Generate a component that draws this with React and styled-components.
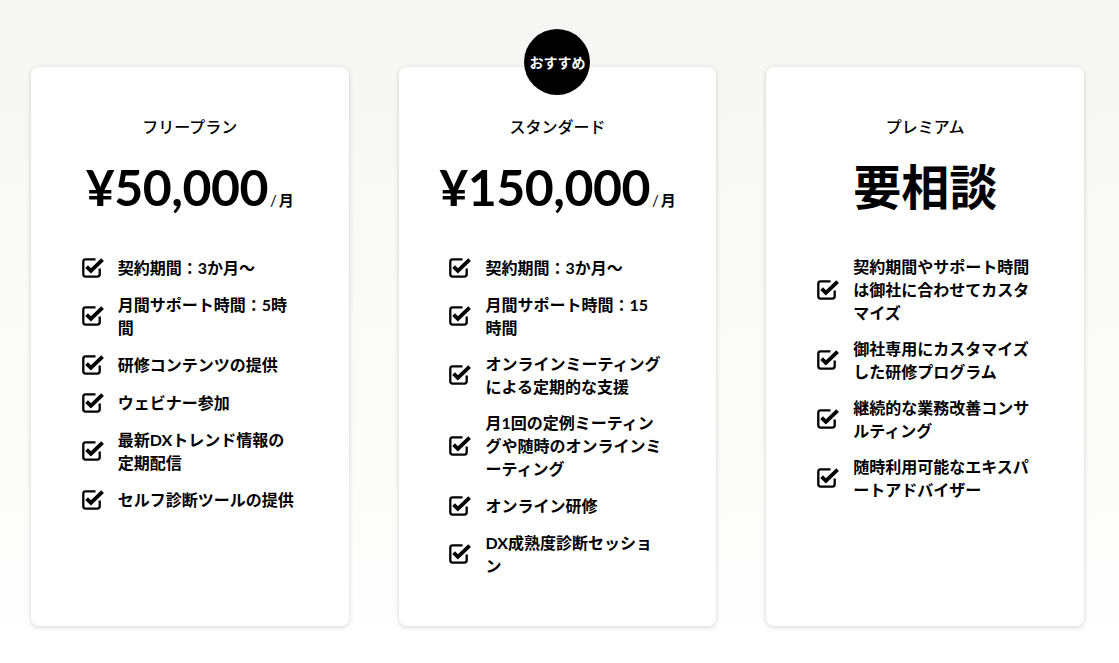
import React from "react";
import styled, { createGlobalStyle } from "styled-components";

const Global = createGlobalStyle`
  html, body {
    margin: 0;
    padding: 0;
  }
  body {
    font-family: Lato, "Noto Sans CJK JP", sans-serif;
    color: #000;
    background: linear-gradient(180deg, #f6f6f4 0%, #fbfbfa 60%, #ffffff 100%);
    min-height: 663px;
  }
`;

const Section = styled.section`
  display: grid;
  grid-template-columns: repeat(3, 1fr);
  gap: 50px;
  padding: 67px 35px 37px 31px;
  box-sizing: border-box;
  width: 1119px;
`;

const Card = styled.div`
  position: relative;
  background: #fff;
  border-radius: 8px;
  box-shadow: 0 1px 5px rgba(0, 0, 0, 0.18);
  padding: 48px 0 49px;
  display: flex;
  flex-direction: column;
  align-items: center;
`;

const Badge = styled.div`
  position: absolute;
  top: -38px;
  left: 50%;
  transform: translateX(-50%);
  width: 66px;
  height: 66px;
  border-radius: 50%;
  background: #000;
  color: #fff;
  display: flex;
  align-items: center;
  justify-content: center;
  font-size: 14px;
  font-weight: 700;
`;

const Title = styled.h3`
  margin: 0;
  font-size: 16px;
  line-height: 24px;
  font-weight: 500;
`;

const Price = styled.div`
  margin-top: 19px;
  height: 58px;
  display: flex;
  align-items: baseline;
  font-size: ${(p) => (p.$text ? "48px" : "50px")};
  line-height: 58px;
  font-weight: 700;
  letter-spacing: ${(p) => (p.$text ? "0" : "-0.5px")};
`;

const Per = styled.span`
  font-size: 15px;
  font-weight: 700;
  margin-left: 2px;
  letter-spacing: 0;

  i {
    font-style: normal;
    font-weight: 400;
    margin-right: 2px;
  }
`;

const List = styled.ul`
  list-style: none;
  margin: 39px 0 0;
  padding: 0;
  width: 216px;
  display: flex;
  flex-direction: column;
  gap: 13px;
`;

const Item = styled.li`
  display: flex;
  align-items: center;
  gap: 14px;
  min-height: 25px;
  font-size: 16px;
  line-height: 23px;
  font-weight: 700;
`;

const Text = styled.span`
  width: 177px;
`;

const CheckIcon = () => (
  <svg width="22" height="20" viewBox="0 0 22 20" style={{ flexShrink: 0 }}>
    <path
      d="M13.5 1.4 H3.6 a2.3 2.3 0 0 0 -2.3 2.3 V16.3 a2.3 2.3 0 0 0 2.3 2.3 H15.4 a2.3 2.3 0 0 0 2.3 -2.3 V10.5"
      fill="none"
      stroke="#000"
      strokeWidth="2.3"
    />
    <path
      d="M4.6 8.6 L8.9 12.9 L20.6 1.6"
      fill="none"
      stroke="#000"
      strokeWidth="3.8"
      strokeLinejoin="miter"
    />
  </svg>
);

const plans = [
  {
    name: "フリープラン",
    price: "¥50,000",
    items: [
      "契約期間：3か月〜",
      "月間サポート時間：5時間",
      "研修コンテンツの提供",
      "ウェビナー参加",
      "最新DXトレンド情報の定期配信",
      "セルフ診断ツールの提供",
    ],
  },
  {
    name: "スタンダード",
    price: "¥150,000",
    badge: "おすすめ",
    items: [
      "契約期間：3か月〜",
      "月間サポート時間：15時間",
      "オンラインミーティングによる定期的な支援",
      "月1回の定例ミーティングや随時のオンラインミーティング",
      "オンライン研修",
      "DX成熟度診断セッション",
    ],
  },
  {
    name: "プレミアム",
    label: "要相談",
    items: [
      "契約期間やサポート時間は御社に合わせてカスタマイズ",
      "御社専用にカスタマイズした研修プログラム",
      "継続的な業務改善コンサルティング",
      "随時利用可能なエキスパートアドバイザー",
    ],
  },
];

export default function App() {
  return (
    <>
      <Global />
      <Section>
        {plans.map((plan) => (
          <Card key={plan.name}>
            {plan.badge && <Badge>{plan.badge}</Badge>}
            <Title>{plan.name}</Title>
            {plan.price ? (
              <Price>
                {plan.price}
                <Per>
                  <i>/</i>月
                </Per>
              </Price>
            ) : (
              <Price $text>{plan.label}</Price>
            )}
            <List>
              {plan.items.map((item, i) => (
                <Item key={i}>
                  <CheckIcon />
                  <Text>{item}</Text>
                </Item>
              ))}
            </List>
          </Card>
        ))}
      </Section>
    </>
  );
}
